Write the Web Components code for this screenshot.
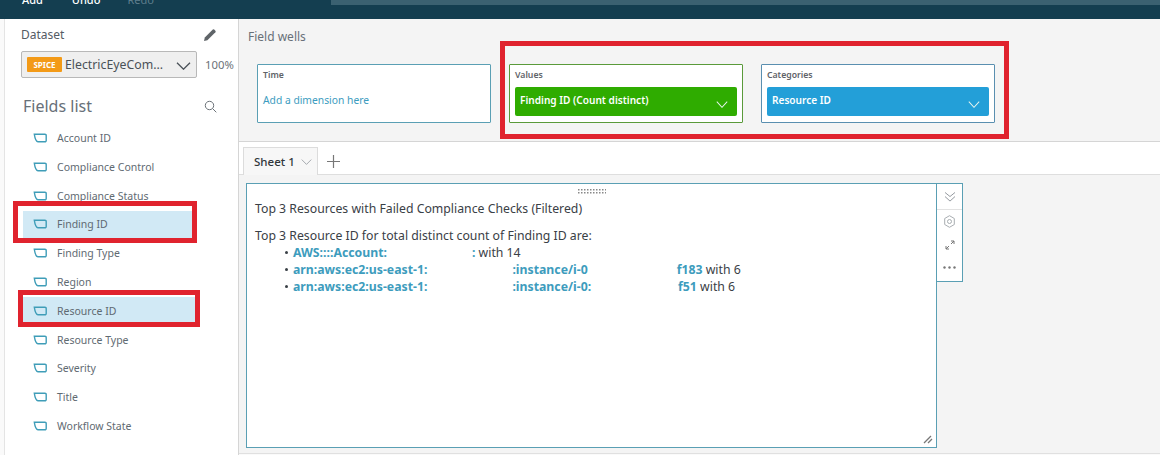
<!DOCTYPE html>
<html><head><meta charset="utf-8">
<style>
html,body{margin:0;padding:0;height:455px;overflow:hidden;background:#f4f4f4;font-family:"Noto Sans","Open Sans",sans-serif;}
</style></head><body>
<qs-app></qs-app>
<script>
const chev=(c,w=15,h=8,sw=1.3)=>`<svg width="${w}" height="${h}" viewBox="0 0 15 8" preserveAspectRatio="none" fill="none" stroke="${c}" stroke-width="${sw}"><path d="M1 .8 7.500 7.200 14 .8"/></svg>`;
function def(name,html){customElements.define(name,class extends HTMLElement{connectedCallback(){if(this.shadowRoot)return;const r=this.attachShadow({mode:'open'});r.innerHTML=typeof html==='function'?html(this):html;}});}

def('qs-topbar',`<style>
:host{display:flex;height:19px;background:#143e50;color:#fff;font-size:11px;overflow:hidden;box-sizing:border-box;padding-left:22px}
.a{margin-top:-8px;line-height:15px;font-weight:500}
.a.u{margin-left:29px}.a.r{margin-left:27px;color:#5f7f8d;font-weight:400}
.s{margin-left:177px;flex:1;height:5px;background:#3b6171}
</style><span class="a">Add</span><span class="a u">Undo</span><span class="a r">Redo</span><div class="s"></div>`);

def('qs-field',h=>`<style>
:host{display:block;height:28.8px;padding-top:.9px;font-size:10.5px;color:#5f6a72;box-sizing:border-box}
.r{height:27px;display:flex;align-items:center;padding-left:10px;${h.hasAttribute('sel')?'background:#d1e9f5;':''}}
svg{margin-right:10px;flex:none}
</style><div class="r"><svg width="14" height="10" viewBox="0 0 14 10" fill="none" stroke="#3f9db8" stroke-width="1.4"><path d="M1.300 1.200H12a1.200 1.200 0 0 1 1.200 1.200v5.200A1.200 1.200 0 0 1 12 8.800H5Q2.400 8.800 1.300 1.200Z"/></svg><slot></slot></div>`);

def('qs-sidebar',`<style>
:host{display:block;width:233px;background:#fff;border-left:1px solid #e4e4e4;border-right:1px solid #d5d5d5;margin-left:4px;height:436px;color:#5f6a72}
.ds{display:flex;justify-content:space-between;align-items:center;padding:6px 21px 0 16px;font-size:12px;color:#545b64;height:19px}
.sel{margin:7px 0 0 16px;display:flex;align-items:center;gap:8px}
.box{width:176px;height:27px;background:#efefef;border:1px solid #b8b8b8;border-radius:2px;box-sizing:border-box;display:flex;align-items:center;padding-left:5px;color:#4a5158;position:relative;font-size:12.3px}
.sp{background:#f39a17;color:#fff;font-size:8px;font-weight:700;width:35px;height:15px;line-height:15px;text-align:center;border-radius:1px;margin-right:3px;flex:none}
.box svg{position:absolute;right:5px;top:10px}
.pc{font-size:11.3px;color:#6b7278}
.fl{display:flex;justify-content:space-between;align-items:center;padding:17px 21px 0 18px;font-size:16px;color:#687078;height:22px}
.list{margin:6.6px 0 0 18px;width:172px}
</style>
<div class="ds"><span>Dataset</span><svg width="14" height="14" viewBox="0 0 14 14"><path d="M1 13l.8-3.400L9.800 1.600a1 1 0 0 1 1.400 0l1.200 1.200a1 1 0 0 1 0 1.400L4.400 12.200Z" fill="#5f6468"/></svg></div>
<div class="sel"><div class="box"><span class="sp">SPICE</span><span>ElectricEyeCom...</span>${chev('#4a5158')}</div><span class="pc">100%</span></div>
<div class="fl"><span>Fields list</span><svg width="13" height="13" viewBox="0 0 13 13" fill="none" stroke="#6b7278" stroke-width="1"><circle cx="5.500" cy="5.500" r="4.200"/><path d="M8.500 8.500 12.300 12.300"/></svg></div>
<div class="list"><slot></slot></div>`);

def('qs-well',h=>{const c=h.getAttribute('color'),b=h.getAttribute('border'),chip=h.getAttribute('chip');return `<style>
:host{display:block;width:234px;height:59px;box-sizing:border-box;background:#fff;border:1px solid ${b};border-radius:1px;padding:5px 5px 0 5px}
.t{font-size:8.7px;font-weight:600;color:#5f6368;line-height:11px}
.chip{margin-top:6px;height:29px;background:${c};border-radius:2px;color:#fff;font-size:10.1px;font-weight:600;display:flex;align-items:center;justify-content:space-between;padding:0 9px 4px 5px;box-sizing:border-box}
.chip svg{margin-top:9px}
.add{margin-top:12px;font-size:10.3px;color:#3c9cc0}
</style><div class="t">${h.getAttribute('label')}</div>${chip?`<div class="chip"><span>${chip}</span>${chev('#e8f5ee',12,7,1.2)}</div>`:`<div class="add">Add a dimension here</div>`}`});

def('qs-wells',`<style>
:host{display:block;height:122px;background:#f4f4f4;border-bottom:1px solid #d5d5d5}
.h{font-size:12px;color:#687078;padding:9px 0 0 9px;height:19px;line-height:17px}
.w{display:flex;gap:18px;padding:17px 0 0 18px}
</style><div class="h">Field wells</div><div class="w"><slot></slot></div>`);

def('qs-tabs',`<style>
:host{display:flex;height:33px;background:#fff;border-bottom:1px solid #dedede;box-sizing:border-box;padding:5px 0 0 4px;align-items:flex-start}
.tab{width:75px;height:28px;background:#f7f7f7;border:1px solid #dcdcdc;border-bottom:0;box-sizing:border-box;display:flex;align-items:center;padding-left:10px;font-size:11.5px;font-weight:500;color:#30363b;gap:6px}
.p{margin:8px 0 0 9px}
</style><div class="tab"><span>Sheet 1</span>${chev('#8a9096',11,6,1)}</div><svg class="p" width="13" height="13" viewBox="0 0 13 13" stroke="#777" stroke-width="1.2"><path d="M6.500 0V13M0 6.500H13"/></svg>`);

def('qs-visual',`<style>
:host{display:flex;align-items:flex-start;margin:8px 0 0 7px}
.p{width:691px;height:265px;box-sizing:border-box;background:#fff;border:1px solid #5a9fb4;padding:13px 8px 0 8px;font-size:12.27px;line-height:17px;color:#3a4046;position:relative}
.grip{text-align:center;height:6px;margin-top:-8px;margin-bottom:4.5px;line-height:0}
.mt{margin-top:10px}
ul{margin:0;padding:0 0 0 38px;list-style:none}
li{position:relative;white-space:nowrap;height:17px}
li::before{content:"";position:absolute;left:-8px;top:7px;width:3px;height:3px;border-radius:50%;background:#3a4046}
b{color:#3d9cbd;font-weight:700}
i{display:inline-block}
.rs{position:absolute;right:3px;bottom:3px}
.tb{width:26px;height:99px;box-sizing:border-box;background:#fff;border:1px solid #5a9fb4;border-left:0;display:flex;flex-direction:column;align-items:center}
.tb .c{height:26px;width:100%;border-bottom:1px solid #e2e2e2;display:flex;align-items:center;justify-content:center;box-sizing:border-box}
.tb .i{height:23px;display:flex;align-items:center;justify-content:center}
</style>
<div class="p">
<div class="grip"><svg width="28" height="6" viewBox="0 0 28 6" fill="#888">${Array.from({length:10},(_,i)=>`<rect x="${i*3}" y="0" width="1.5" height="1.5"/><rect x="${i*3}" y="3" width="1.5" height="1.5"/>`).join('')}</svg></div>
<div>Top 3 Resources with Failed Compliance Checks (Filtered)</div>
<div class="mt">Top 3 Resource ID for total distinct count of Finding ID are:</div>
<ul>
<li><b>AWS::::Account:</b><i style="width:85px"></i><b>:</b> with 14</li>
<li><b>arn:aws:ec2:us-east-1:</b><i style="width:85px"></i><b>:instance/i-0</b><i style="width:89px"></i><b>f183</b> with 6</li>
<li><b>arn:aws:ec2:us-east-1:</b><i style="width:85px"></i><b>:instance/i-0:</b><i style="width:87px"></i><b>f51</b> with 6</li>
</ul>
<svg class="rs" width="10" height="10" viewBox="0 0 10 10" stroke="#777" stroke-width="1.3"><path d="M1 9 8 2M5 9 9 5"/></svg>
</div>
<div class="tb">
<div class="c"><svg width="12" height="10" viewBox="0 0 12 11" fill="none" stroke="#8a9096" stroke-width="1"><path d="M.5.5 6 5 11.500.5M.5 5 6 10 11.500 5"/></svg></div>
<div class="i"><svg width="11" height="13" viewBox="0 0 11 13" fill="none" stroke="#a8adb1" stroke-width="1"><path d="M5.500.7 10.300 3.500V9.500L5.500 12.300.7 9.500V3.500Z"/><circle cx="5.500" cy="6.500" r="2"/></svg></div>
<div class="i"><svg width="10" height="10" viewBox="0 0 10 10" fill="none" stroke="#777" stroke-width="1"><path d="M1 9 4 6M6 4 9 1M6 1H9V4M1 6V9H4"/></svg></div>
<div class="i"><svg width="13" height="3" viewBox="0 0 13 3" fill="#777"><circle cx="1.500" cy="1.500" r="1.200"/><circle cx="6.500" cy="1.500" r="1.200"/><circle cx="11.500" cy="1.500" r="1.200"/></svg></div>
</div>`);

def('qs-mark',`<style>:host{display:block;position:absolute;box-sizing:border-box;border:5px solid #e0232e;pointer-events:none}</style>`);

def('qs-app',`<style>
:host{display:block;position:relative;width:1160px;height:455px;overflow:hidden}
.m{display:flex;align-items:flex-start;background:#fafafa;height:436px}
.c{flex:1;min-width:0;height:435px;box-sizing:border-box;background:#f4f4f4;border-bottom:1px solid #e0e0e0}
</style><slot name="top"></slot><div class="m"><slot name="side"></slot><div class="c"><slot name="main"></slot></div></div><slot name="marks"></slot>`);

document.querySelector('qs-app').innerHTML=`
<qs-topbar slot="top"></qs-topbar>
<qs-sidebar slot="side">
${['Account ID','Compliance Control','Compliance Status','Finding ID','Finding Type','Region','Resource ID','Resource Type','Severity','Title','Workflow State'].map(n=>`<qs-field${n==='Finding ID'||n==='Resource ID'?' sel':''}>${n}</qs-field>`).join('')}
</qs-sidebar>
<div slot="main">
<qs-wells>
<qs-well label="Time" border="#5a9fb4"></qs-well>
<qs-well label="Values" border="#5a9a3a" color="#2fac00" chip="Finding ID (Count distinct)"></qs-well>
<qs-well label="Categories" border="#5a8fb0" color="#239fd8" chip="Resource ID"></qs-well>
</qs-wells>
<qs-tabs></qs-tabs>
<qs-visual></qs-visual>
</div>
<qs-mark slot="marks" style="left:13px;top:201px;width:184px;height:42px"></qs-mark>
<qs-mark slot="marks" style="left:18px;top:290px;width:182px;height:37px"></qs-mark>
<qs-mark slot="marks" style="left:500px;top:41px;width:509px;height:98px"></qs-mark>`;
</script></body></html>
